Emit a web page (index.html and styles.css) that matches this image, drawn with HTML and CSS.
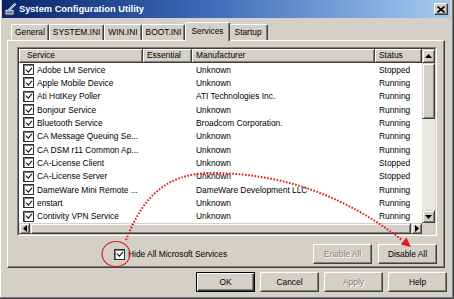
FILE: index.html
```html
<!DOCTYPE html>
<html>
<head>
<meta charset="utf-8">
<title>System Configuration Utility</title>
<link rel="stylesheet" href="styles.css">
</head>
<body>
<div class="window">
  <div class="titlebar">
    <svg class="app-icon" width="13" height="13" viewBox="0 0 13 13">
      <rect x="1" y="6.5" width="9" height="5.5" fill="#c8c8c8" stroke="#303030" stroke-width="0.8"/>
      <rect x="2.5" y="8" width="6" height="2.5" fill="#5078c8"/>
      <path d="M4 8 L11.5 0.8" stroke="#ffffff" stroke-width="2.2"/>
      <path d="M4 8 L11.5 0.8" stroke="#2050a0" stroke-width="0.7"/>
    </svg>
    <span class="title">System Configuration Utility</span>
    <span class="close">
      <svg width="8" height="7" viewBox="0 0 8 7"><path d="M0.5 0.5 L7.5 6.5 M7.5 0.5 L0.5 6.5" stroke="#000" stroke-width="1.6"/></svg>
    </span>
  </div>

  <div class="body">
    <div class="tabs">
      <div class="tab">General</div>
      <div class="tab">SYSTEM.INI</div>
      <div class="tab">WIN.INI</div>
      <div class="tab">BOOT.INI</div>
      <div class="tab active">Services</div>
      <div class="tab">Startup</div>
    </div>

    <div class="panel">
      <div class="lv-outer">
        <div class="listview">
          <div class="lv-main">
            <div class="lv-header">
              <div class="th first">Service</div>
              <div class="th">Essential</div>
              <div class="th">Manufacturer</div>
              <div class="th">Status</div>
            </div>
            <div class="row"><div class="cell svc"><span class="cb"></span>Adobe LM Service</div><div class="cell"></div><div class="cell">Unknown</div><div class="cell">Stopped</div></div>
            <div class="row"><div class="cell svc"><span class="cb"></span>Apple Mobile Device</div><div class="cell"></div><div class="cell">Unknown</div><div class="cell">Running</div></div>
            <div class="row"><div class="cell svc"><span class="cb"></span>Ati HotKey Poller</div><div class="cell"></div><div class="cell">ATI Technologies Inc.</div><div class="cell">Running</div></div>
            <div class="row"><div class="cell svc"><span class="cb"></span>Bonjour Service</div><div class="cell"></div><div class="cell">Unknown</div><div class="cell">Running</div></div>
            <div class="row"><div class="cell svc"><span class="cb"></span>Bluetooth Service</div><div class="cell"></div><div class="cell">Broadcom Corporation.</div><div class="cell">Running</div></div>
            <div class="row"><div class="cell svc"><span class="cb"></span>CA Message Queuing Se...</div><div class="cell"></div><div class="cell">Unknown</div><div class="cell">Running</div></div>
            <div class="row"><div class="cell svc"><span class="cb"></span>CA DSM r11 Common Ap...</div><div class="cell"></div><div class="cell">Unknown</div><div class="cell">Running</div></div>
            <div class="row"><div class="cell svc"><span class="cb"></span>CA-License Client</div><div class="cell"></div><div class="cell">Unknown</div><div class="cell">Stopped</div></div>
            <div class="row"><div class="cell svc"><span class="cb"></span>CA-License Server</div><div class="cell"></div><div class="cell">Unknown</div><div class="cell">Stopped</div></div>
            <div class="row"><div class="cell svc"><span class="cb"></span>DameWare Mini Remote ...</div><div class="cell"></div><div class="cell">DameWare Development LLC</div><div class="cell">Running</div></div>
            <div class="row"><div class="cell svc"><span class="cb"></span>enstart</div><div class="cell"></div><div class="cell">Unknown</div><div class="cell">Running</div></div>
            <div class="row"><div class="cell svc"><span class="cb"></span>Contivity VPN Service</div><div class="cell"></div><div class="cell">Unknown</div><div class="cell">Running</div></div>
          </div>

          <div class="vscroll">
            <div class="sbtn up"><svg width="7" height="4" viewBox="0 0 7 4"><path d="M3.5 0 L7 4 L0 4 Z" fill="#000"/></svg></div>
            <div class="vthumb"></div>
            <div class="track"></div>
            <div class="sbtn down"><svg width="7" height="4" viewBox="0 0 7 4"><path d="M0 0 L7 0 L3.5 4 Z" fill="#000"/></svg></div>
          </div>

          <div class="hscroll">
            <div class="sbtn left"><svg width="4" height="7" viewBox="0 0 4 7"><path d="M4 0 L4 7 L0 3.5 Z" fill="#000"/></svg></div>
            <div class="hthumb"></div>
            <div class="sbtn right"><svg width="4" height="7" viewBox="0 0 4 7"><path d="M0 0 L4 3.5 L0 7 Z" fill="#000"/></svg></div>
          </div>
          <div class="corner"></div>
        </div>
      </div>

      <div class="panel-footer">
        <label class="hide"><span class="cb"></span>Hide All Microsoft Services</label>
        <button class="btn disabled">Enable All</button>
        <button class="btn">Disable All</button>
      </div>
    </div>

    <div class="dialog-buttons">
      <button class="btn default">OK</button>
      <button class="btn">Cancel</button>
      <button class="btn disabled">Apply</button>
      <button class="btn">Help</button>
    </div>
  </div>

  <svg class="annotation" width="454" height="299" viewBox="0 0 454 299">
    <ellipse cx="116" cy="254" rx="14" ry="12.5" fill="none" stroke="#d81818" stroke-width="1.1"/>
    <path d="M126 240 C 140 205, 160 172, 215 173 C 290 174, 350 200, 402 240" fill="none" stroke="#e01818" stroke-width="2" stroke-dasharray="1.6 1.6"/>
    <polygon points="411,247 400.8,244.6 406.4,237.4" fill="#e01818"/>
  </svg>
</div>
</body>
</html>
```

FILE: styles.css
```css
html, body {
  margin: 0;
  padding: 0;
  background: #d4d0c8;
}

body {
  font-family: "Liberation Sans", Arial, sans-serif;
  font-size: 8.4px;
  color: #000;
}

.window {
  position: relative;
  width: 454px;
  height: 299px;
  box-sizing: border-box;
  background: #d4d0c8;
  border-right: 1px solid #404040;
  border-bottom: 1px solid #404040;
  box-shadow: inset -1px -1px #808080, inset 1px 0 #ffffff;
  padding: 0 3px 3px 2px;
  display: flex;
  flex-direction: column;
  overflow: hidden;
}

/* Title bar */
.titlebar {
  height: 18px;
  flex: none;
  display: flex;
  align-items: center;
  padding-left: 2px;
  background: linear-gradient(to right, #0a246a 0%, #3a6ab8 45%, #a6caf0 100%);
  color: #fff;
}

.app-icon {
  flex: none;
  margin-right: 2px;
}

.title {
  font-weight: bold;
  font-size: 9.3px;
}

.close {
  margin-left: auto;
  margin-right: 2px;
  width: 14px;
  height: 12px;
  box-sizing: border-box;
  background: #d4d0c8;
  border: 1px solid;
  border-color: #fff #404040 #404040 #fff;
  box-shadow: inset -1px -1px #808080;
  display: flex;
  align-items: center;
  justify-content: center;
}

/* Body */
.body {
  flex: 1;
  display: flex;
  flex-direction: column;
  padding-top: 4px;
}

/* Tabs */
.tabs {
  height: 18px;
  display: flex;
  align-items: flex-end;
  padding-left: 9px;
}

.tab {
  position: relative;
  height: 16px;
  box-sizing: border-box;
  padding: 0 3px;
  line-height: 15px;
  border-top: 1px solid #fff;
  border-left: 1px solid #fff;
  border-right: 1px solid #404040;
  box-shadow: inset -1px 0 #808080;
  border-radius: 2px 2px 0 0;
  white-space: nowrap;
  background: #d4d0c8;
}

.tab.active {
  z-index: 2;
  height: 19px;
  margin: 0 -1px -1px 0;
  padding: 0 5px;
  line-height: 16px;
}

.tab:last-child {
  padding: 0 5px;
}

/* Panel */
.panel {
  margin: 0 5px;
  height: 228px;
  box-sizing: border-box;
  border-top: 1px solid #fff;
  border-left: 1px solid #fff;
  border-right: 1px solid #404040;
  border-bottom: 1px solid #404040;
  box-shadow: inset -1px -1px #808080;
  padding: 6px 7px 3px 9px;
  display: flex;
  flex-direction: column;
}

/* List view */
.lv-outer {
  height: 189px;
  box-sizing: border-box;
  border: 1px solid;
  border-color: #808080 #fff #fff #808080;
}

.listview {
  height: 100%;
  box-sizing: border-box;
  border: 1px solid;
  border-color: #404040 #d4d0c8 #d4d0c8 #404040;
  background: #fff;
  display: grid;
  grid-template-columns: 403px 13px;
  grid-template-rows: 1fr 11px;
}

.lv-main {
  overflow: hidden;
}

.lv-header,
.row {
  display: grid;
  grid-template-columns: 124px 49px 183px 47px;
}

.lv-header {
  height: 14px;
}

.th {
  box-sizing: border-box;
  height: 14px;
  line-height: 13px;
  padding-left: 4px;
  background: #d4d0c8;
  border-right: 1px solid #404040;
  border-bottom: 1px solid #404040;
  box-shadow: inset 1px 1px #fff, inset -1px -1px #808080;
  white-space: nowrap;
  overflow: hidden;
}

.th.first {
  padding-left: 8px;
}

.row {
  height: 13.33px;
}

.cell {
  display: flex;
  align-items: center;
  padding-left: 4px;
  white-space: nowrap;
  overflow: hidden;
}

.cell.svc {
  gap: 3px;
}

/* Checkbox */
.cb {
  position: relative;
  flex: none;
  width: 11px;
  height: 11px;
  box-sizing: border-box;
  border: 1px solid #303030;
  box-shadow: inset 1px 1px #808080;
  background: #fff;
}

.cb::after {
  content: "";
  position: absolute;
  left: 2.6px;
  top: 0.4px;
  width: 2.6px;
  height: 5px;
  border: solid #000;
  border-width: 0 1.7px 1.7px 0;
  transform: rotate(42deg);
}

/* Scroll bars */
.vscroll {
  display: flex;
  flex-direction: column;
  background: #ebe9e4;
}

.hscroll {
  display: flex;
  background: #ebe9e4;
}

.corner {
  background: #d4d0c8;
}

.sbtn,
.vthumb,
.hthumb {
  box-sizing: border-box;
  background: #d4d0c8;
  border: 1px solid;
  border-color: #d4d0c8 #404040 #404040 #d4d0c8;
  box-shadow: inset 1px 1px #fff, inset -1px -1px #808080;
  display: flex;
  align-items: center;
  justify-content: center;
  flex: none;
}

.sbtn.up { height: 14px; }
.sbtn.down { height: 13px; }
.sbtn.left,
.sbtn.right { width: 11px; }

.vthumb { height: 56px; }
.track { flex: 1; }
.hthumb { flex: 1; }

/* Footer of panel */
.panel-footer {
  margin-top: 8px;
  height: 20px;
  display: flex;
  align-items: center;
  gap: 6px;
}

.hide {
  display: flex;
  align-items: center;
  gap: 3px;
  margin-left: 97px;
  margin-right: auto;
  white-space: nowrap;
}

/* Buttons */
.btn {
  width: 59px;
  height: 20px;
  box-sizing: border-box;
  padding: 0;
  font-family: inherit;
  font-size: 8.4px;
  color: #000;
  background: #d4d0c8;
  border: 1px solid;
  border-color: #fff #404040 #404040 #fff;
  box-shadow: inset -1px -1px #808080;
  border-radius: 0;
}

.btn.disabled {
  color: #808080;
  text-shadow: 1px 1px #fff;
}

.btn.default {
  border: 1px solid #000;
  box-shadow: inset 1px 1px #fff, inset -1px -1px #404040, inset -2px -2px #808080;
}

.dialog-buttons {
  margin-top: 4px;
  display: flex;
  justify-content: flex-end;
  gap: 5px;
  padding-right: 3px;
}

/* Annotation overlay */
.annotation {
  position: absolute;
  left: 0;
  top: 0;
  pointer-events: none;
}
```
